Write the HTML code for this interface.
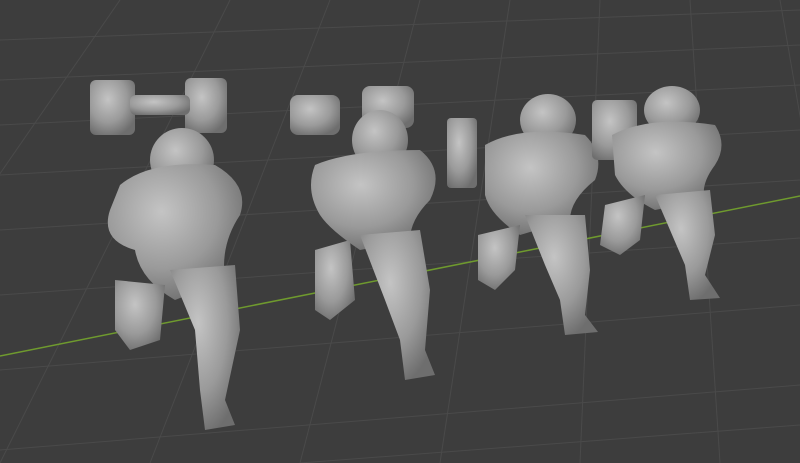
<!DOCTYPE html>
<html><head><style>html,body{margin:0;padding:0;background:#3d3d3d;overflow:hidden}svg{display:block}</style></head>
<body>
<svg width="800" height="463" viewBox="0 0 800 463" xmlns="http://www.w3.org/2000/svg">
<defs>
<radialGradient id="g" cx="40%" cy="35%" r="70%"><stop offset="0" stop-color="#c4c4c4"/><stop offset="0.6" stop-color="#9a9a9a"/><stop offset="1" stop-color="#6e6e6e"/></radialGradient>
</defs>
<rect width="800" height="463" fill="#3d3d3d"/>
<g stroke="#4a4a4a" stroke-width="1">
<line x1="0" y1="40" x2="800" y2="10"/><line x1="0" y1="80" x2="800" y2="45"/><line x1="0" y1="125" x2="800" y2="85"/>
<line x1="0" y1="175" x2="800" y2="130"/><line x1="0" y1="230" x2="800" y2="180"/><line x1="0" y1="295" x2="800" y2="238"/>
<line x1="0" y1="370" x2="800" y2="305"/><line x1="0" y1="450" x2="800" y2="385"/><line x1="300" y1="463" x2="800" y2="425"/>
<line x1="-200" y1="463" x2="120" y2="0"/><line x1="0" y1="463" x2="230" y2="0"/><line x1="150" y1="463" x2="330" y2="0"/>
<line x1="300" y1="463" x2="420" y2="0"/><line x1="440" y1="463" x2="510" y2="0"/><line x1="580" y1="463" x2="600" y2="0"/>
<line x1="720" y1="463" x2="690" y2="0"/><line x1="860" y1="463" x2="780" y2="0"/><line x1="1000" y1="463" x2="870" y2="0"/>
</g>
<line x1="0" y1="356" x2="800" y2="196" stroke="#6f9a2e" stroke-width="1.5"/>
<g fill="url(#g)">
<!-- fig1 -->
<rect x="90" y="80" width="45" height="55" rx="6"/><rect x="185" y="78" width="42" height="55" rx="6"/><rect x="130" y="95" width="60" height="20" rx="6"/>
<ellipse cx="182" cy="160" rx="32" ry="32"/>
<path d="M120 185 Q150 160 215 165 Q250 185 240 215 Q220 245 225 280 L175 300 Q140 280 135 250 Q100 240 110 210 Z"/>
<path d="M115 280 L165 285 L160 340 L130 350 L115 330 Z"/>
<path d="M170 270 L235 265 L240 330 L225 400 L235 425 L205 430 L200 390 L195 330 Z"/>
<!-- fig2 -->
<rect x="290" y="95" width="50" height="40" rx="8"/><rect x="362" y="86" width="52" height="42" rx="8"/>
<ellipse cx="380" cy="140" rx="28" ry="30"/>
<path d="M315 165 Q350 150 420 150 Q445 170 430 200 Q410 220 410 240 L360 250 Q330 230 320 215 Q305 190 315 165 Z"/>
<path d="M315 250 L350 240 L355 300 L330 320 L315 310 Z"/>
<path d="M360 235 L420 230 L430 290 L425 350 L435 375 L405 380 L400 340 L385 300 Z"/>
<!-- fig3 -->
<rect x="447" y="118" width="30" height="70" rx="4"/>
<ellipse cx="548" cy="120" rx="28" ry="26"/>
<path d="M485 145 Q520 125 585 135 Q605 155 595 180 Q570 200 570 220 L520 235 Q490 215 485 195 Z"/>
<path d="M478 235 L520 225 L515 270 L495 290 L478 280 Z"/>
<path d="M525 215 L585 215 L590 270 L585 315 L598 332 L565 335 L560 300 L545 265 Z"/>
<!-- fig4 -->
<rect x="592" y="100" width="45" height="60" rx="5"/>
<ellipse cx="672" cy="110" rx="28" ry="24"/>
<path d="M612 135 Q650 115 715 125 Q728 145 715 165 Q700 185 705 200 L655 210 Q625 195 615 175 Z"/>
<path d="M605 205 L645 195 L640 240 L620 255 L600 245 Z"/>
<path d="M655 195 L710 190 L715 235 L705 275 L720 298 L690 300 L685 265 L670 230 Z"/>
</g>
</svg>
</body></html>
